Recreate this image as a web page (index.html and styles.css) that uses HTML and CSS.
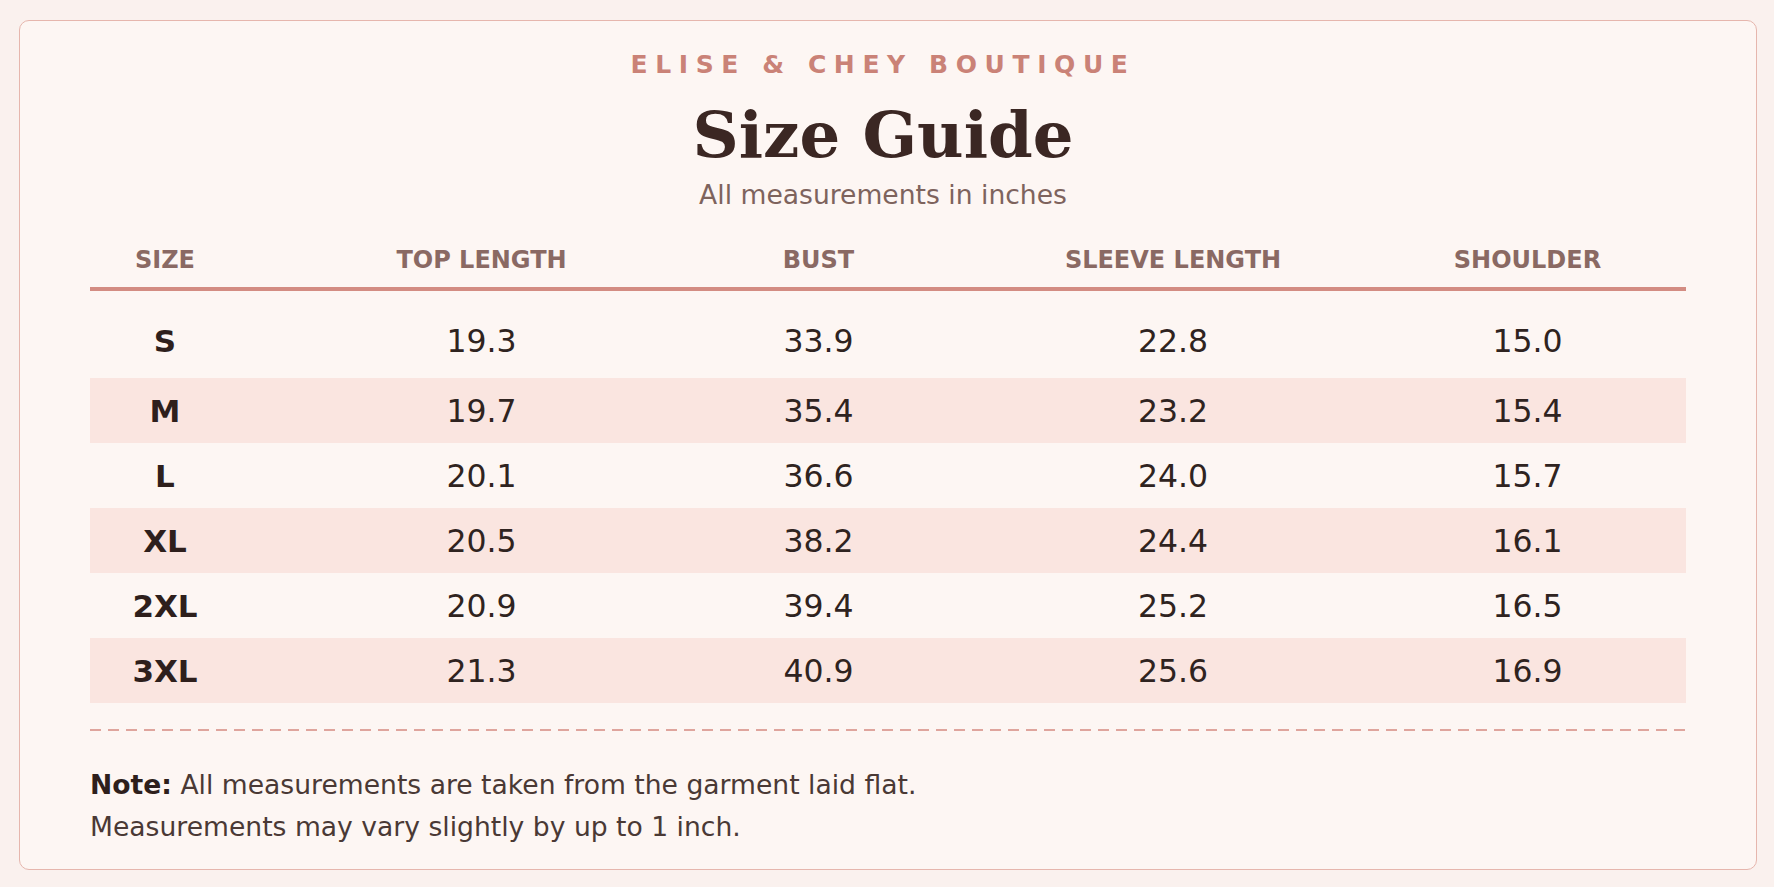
FILE: index.html
```html
<!DOCTYPE html>
<html lang="en">
<head>
<meta charset="utf-8">
<title>Size Guide – Elise &amp; Chey Boutique</title>
<link rel="stylesheet" href="styles.css">
</head>
<body>
<main class="card">
  <header class="heading">
    <div class="brand">ELISE &amp; CHEY BOUTIQUE</div>
    <h1 class="title">Size Guide</h1>
    <p class="subtitle">All measurements in inches</p>
  </header>

  <section class="table">
    <div class="row head">
      <div class="cell">SIZE</div>
      <div class="cell">TOP LENGTH</div>
      <div class="cell">BUST</div>
      <div class="cell">SLEEVE LENGTH</div>
      <div class="cell">SHOULDER</div>
    </div>
    <div class="body">
      <div class="row"><div class="cell size">S</div><div class="cell">19.3</div><div class="cell">33.9</div><div class="cell">22.8</div><div class="cell">15.0</div></div>
      <div class="row alt"><div class="cell size">M</div><div class="cell">19.7</div><div class="cell">35.4</div><div class="cell">23.2</div><div class="cell">15.4</div></div>
      <div class="row"><div class="cell size">L</div><div class="cell">20.1</div><div class="cell">36.6</div><div class="cell">24.0</div><div class="cell">15.7</div></div>
      <div class="row alt"><div class="cell size">XL</div><div class="cell">20.5</div><div class="cell">38.2</div><div class="cell">24.4</div><div class="cell">16.1</div></div>
      <div class="row"><div class="cell size">2XL</div><div class="cell">20.9</div><div class="cell">39.4</div><div class="cell">25.2</div><div class="cell">16.5</div></div>
      <div class="row alt"><div class="cell size">3XL</div><div class="cell">21.3</div><div class="cell">40.9</div><div class="cell">25.6</div><div class="cell">16.9</div></div>
    </div>
  </section>

  <hr class="divider">

  <footer class="note">
    <p><strong>Note:</strong> All measurements are taken from the garment laid flat.</p>
    <p>Measurements may vary slightly by up to 1 inch.</p>
  </footer>
</main>
</body>
</html>
```

FILE: styles.css
```css
* { box-sizing: border-box; }

html, body {
  margin: 0;
  padding: 0;
}

body {
  background: #faf1ee;
  font-family: "DejaVu Sans", "Liberation Sans", sans-serif;
  color: #2f2320;
  width: 1774px;
  height: 887px;
  padding: 20px 17px 17px 19px;
}

.card {
  height: 850px;
  background: #fdf6f3;
  border: 1.5px solid #e6b6ad;
  border-radius: 10px;
  padding: 29px 70px 0 70px;
}

.heading {
  display: flex;
  flex-direction: column;
  align-items: center;
  text-align: center;
  padding-right: 10px;
}

.brand {
  font-size: 25px;
  line-height: 30px;
  font-weight: bold;
  letter-spacing: 7.6px;
  color: #ca8277;
}

.title {
  margin: 19px 0 0;
  font-family: "DejaVu Serif", "Liberation Serif", serif;
  font-weight: bold;
  font-size: 64px;
  line-height: 72px;
  color: #3b2723;
}

.subtitle {
  margin: 9px 0 0;
  font-size: 26.6px;
  line-height: 30px;
  color: #7e635d;
}

.table {
  margin-top: 35px;
}

.row {
  display: grid;
  grid-template-columns: 150px 483px 191px 518px 191px 1fr;
  align-items: center;
  height: 65px;
}

.body .row:first-child {
  padding-bottom: 10px;
}

.cell {
  text-align: center;
  font-size: 31.5px;
  white-space: nowrap;
}

.row.head {
  height: auto;
  padding-bottom: 12px;
  border-bottom: 4px solid #d38c82;
}

.row.head .cell {
  font-size: 24px;
  line-height: 30px;
  font-weight: bold;
  color: #8a6963;
}

.body {
  margin-top: 22px;
}

.row.alt {
  background: #fae5e0;
}

.cell.size {
  font-size: 31px;
  font-weight: bold;
  color: #2e1f1c;
}

.divider {
  margin: 26px 0 0;
  border: 0;
  height: 2px;
  background: repeating-linear-gradient(to right, #dfa59d 0 11px, transparent 11px 18px);
}

.note {
  margin-top: 33px;
  font-size: 26.6px;
  line-height: 42px;
  color: #4a3935;
}

.note p {
  margin: 0;
}

.note strong {
  color: #2e1f1c;
}
```
